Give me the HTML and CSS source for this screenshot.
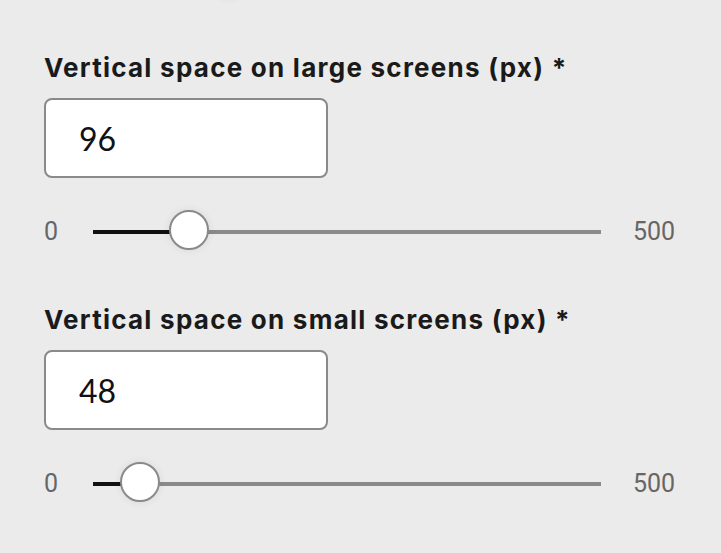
FILE: index.html
```html
<!DOCTYPE html>
<html lang="en">
<head>
<meta charset="utf-8">
<title>Spacing settings</title>
<link rel="stylesheet" href="styles.css">
</head>
<body>
<div class="form">
  <div class="slider-row slider-prev">
    <span class="range-min"></span>
    <div class="track" style="--v:136">
      <div class="fill"></div>
      <div class="thumb"></div>
    </div>
    <span class="range-max"></span>
  </div>

  <div class="field">
    <label class="field-label" for="space-lg">Vertical space on large screens (px) *</label>
    <input class="field-input" id="space-lg" type="text" value="96">
    <div class="slider-row">
      <span class="range-min">0</span>
      <div class="track" style="--v:96">
        <div class="fill"></div>
        <div class="thumb"></div>
      </div>
      <span class="range-max">500</span>
    </div>
  </div>

  <div class="field">
    <label class="field-label" for="space-sm">Vertical space on small screens (px) *</label>
    <input class="field-input" id="space-sm" type="text" value="48">
    <div class="slider-row">
      <span class="range-min">0</span>
      <div class="track" style="--v:48">
        <div class="fill"></div>
        <div class="thumb"></div>
      </div>
      <span class="range-max">500</span>
    </div>
  </div>
</div>
</body>
</html>
```

FILE: styles.css
```css
html, body {
  margin: 0;
  padding: 0;
  background: #ebebeb;
  overflow: hidden;
}

.form {
  display: flex;
  flex-direction: column;
  padding: 0 43px 0 44px;
  height: 553px;
  box-sizing: border-box;
}

.slider-prev {
  margin-top: -42px;
}

.field {
  display: flex;
  flex-direction: column;
  align-items: flex-start;
  margin-top: 54px;
}

.field-label {
  font-family: Inter, "Liberation Sans", sans-serif;
  font-weight: 700;
  font-size: 26px;
  letter-spacing: 1.25px;
  line-height: 32px;
  color: #1a1a1a;
  white-space: nowrap;
}

.field-input {
  margin: 14px 0 0 0;
  width: 284px;
  height: 80px;
  box-sizing: border-box;
  border: 2px solid #8a8a8a;
  border-radius: 8px;
  background: #fff;
  padding: 0 0 0 33px;
  font-family: Lato, "Liberation Sans", sans-serif;
  font-weight: 400;
  font-size: 32px;
  color: #111;
  outline: none;
}

.field .slider-row {
  margin-top: 32px;
  align-self: stretch;
}

.slider-row {
  display: flex;
  align-items: flex-start;
  height: 40px;
}

.range-min,
.range-max {
  font-family: Roboto, "Liberation Sans", sans-serif;
  font-size: 25px;
  line-height: 40px;
  margin-top: 2px;
  color: #666;
}

.range-min {
  width: 49px;
  flex: none;
}

.range-max {
  width: 45px;
  flex: none;
  margin-left: 32px;
}

.track {
  position: relative;
  flex: 1;
  height: 40px;
}

.track::before {
  content: "";
  position: absolute;
  left: 0;
  right: 0;
  top: 20px;
  height: 4px;
  background: #8a8a8a;
}

.fill {
  position: absolute;
  left: 0;
  top: 20px;
  height: 4px;
  width: calc(var(--v) / 500 * 100% - 2px);
  background: #111;
}

.thumb {
  position: absolute;
  top: 0;
  left: calc(var(--v) / 500 * 100% - 22px);
  width: 40px;
  height: 40px;
  box-sizing: border-box;
  border: 2px solid #8a8a8a;
  border-radius: 50%;
  background: #fff;
  box-shadow: 0 0 8px rgba(0, 0, 0, 0.08);
}
```
